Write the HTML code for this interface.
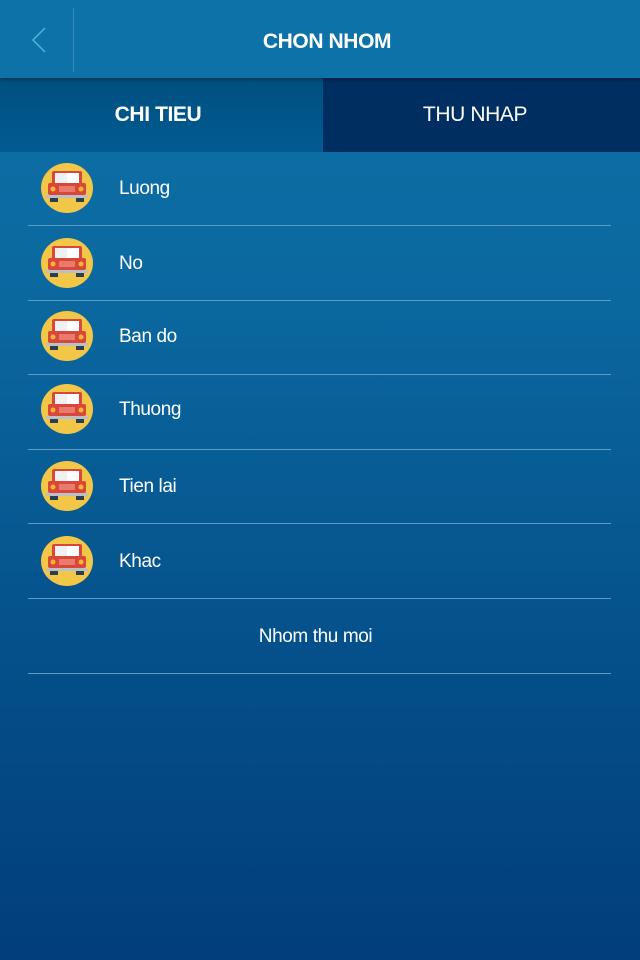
<!DOCTYPE html>
<html><head><meta charset="utf-8"><style>
*{margin:0;padding:0;box-sizing:border-box}
body{width:640px;height:960px;overflow:hidden;font-family:"Liberation Sans",sans-serif;color:#fff;background:linear-gradient(#0d72a8 0px,#0b689f 300px,#05508a 650px,#013e7a 960px);position:relative;letter-spacing:-0.4px}
.hdr{position:absolute;top:0;left:0;width:640px;height:78px;background:#0d72a7;box-shadow:0 2px 3px rgba(0,0,0,.35);z-index:2}
.hdr .t{position:absolute;left:0;right:0;top:30px;text-align:center;font-size:21px;font-weight:bold;padding-left:14px}
.hdr .sep{position:absolute;left:73px;top:8px;width:1px;height:64px;background:#3a8ab8}
.tabs{position:absolute;top:78px;left:0;width:640px;height:74px}
.tab{position:absolute;top:0;height:74px;font-size:21px;text-align:center;line-height:74px}
.t1{left:0;width:316px;background:linear-gradient(#00507f,#015b91);font-weight:bold}
.t1b{position:absolute;left:316px;top:0;width:7px;height:74px;background:linear-gradient(#00507f,#015b91)}
.t2{left:324px;width:302px;background:#002e61}
.t2b{position:absolute;left:323px;top:0;width:317px;height:74px;background:#002e61}
.row{position:absolute;left:28px;width:583px;border-bottom:1px solid #5c9cc4}
.row .n{position:absolute;left:91px;font-size:19px}
.ic{position:absolute;left:13px}
.new{position:absolute;left:28px;width:583px;top:599px;height:75px;border-bottom:1px solid #5c9cc4;text-align:center;font-size:19px;line-height:76px;padding-right:8px}
</style></head><body>
<div class="hdr"><svg style="position:absolute;left:30px;top:27px" width="18" height="26"><path d="M15 1 L3 13 L15 25" stroke="#4fb5d6" stroke-width="1.5" fill="none"/></svg><div class="sep"></div><div class="t">CHON NHOM</div></div>
<div class="tabs"><div class="t1b"></div><div class="t2b"></div><div class="tab t1">CHI TIEU</div><div class="tab t2">THU NHAP</div></div>
<svg width="0" height="0" style="position:absolute"><defs><g id="car">
<ellipse cx="26" cy="25" rx="26" ry="25" fill="#f2c646"/>
<rect x="11" y="8" width="30" height="14" rx="2" fill="#d9473a"/>
<rect x="14" y="10" width="24" height="10" fill="#eef0f2"/><rect x="26" y="10" width="12" height="10" fill="#fff"/>
<rect x="7" y="20" width="38" height="12" rx="2" fill="#d9473a"/>
<circle cx="12" cy="26" r="2.5" fill="#f7b733"/><circle cx="40" cy="26" r="2.5" fill="#f7b733"/>
<rect x="18" y="23" width="16" height="6" fill="#e87a6e"/>
<rect x="5" y="32" width="42" height="3" fill="#b9c1c6"/>
<rect x="9" y="35" width="8" height="4" fill="#2c3e50"/><rect x="35" y="35" width="8" height="4" fill="#2c3e50"/>
</g></defs></svg>
<div class="row" style="top:152px;height:74px"><svg class="ic" style="top:11px" width="52" height="50"><use href="#car"/></svg><div class="n" style="top:26px">Luong</div></div>
<div class="row" style="top:226px;height:75px"><svg class="ic" style="top:12px" width="52" height="50"><use href="#car"/></svg><div class="n" style="top:27px">No</div></div>
<div class="row" style="top:301px;height:74px"><svg class="ic" style="top:10px" width="52" height="50"><use href="#car"/></svg><div class="n" style="top:25px">Ban do</div></div>
<div class="row" style="top:375px;height:75px"><svg class="ic" style="top:9px" width="52" height="50"><use href="#car"/></svg><div class="n" style="top:24px">Thuong</div></div>
<div class="row" style="top:450px;height:74px"><svg class="ic" style="top:11px" width="52" height="50"><use href="#car"/></svg><div class="n" style="top:26px">Tien lai</div></div>
<div class="row" style="top:524px;height:75px"><svg class="ic" style="top:12px" width="52" height="50"><use href="#car"/></svg><div class="n" style="top:27px">Khac</div></div>
<div class="new">Nhom thu moi</div>
</body></html>
